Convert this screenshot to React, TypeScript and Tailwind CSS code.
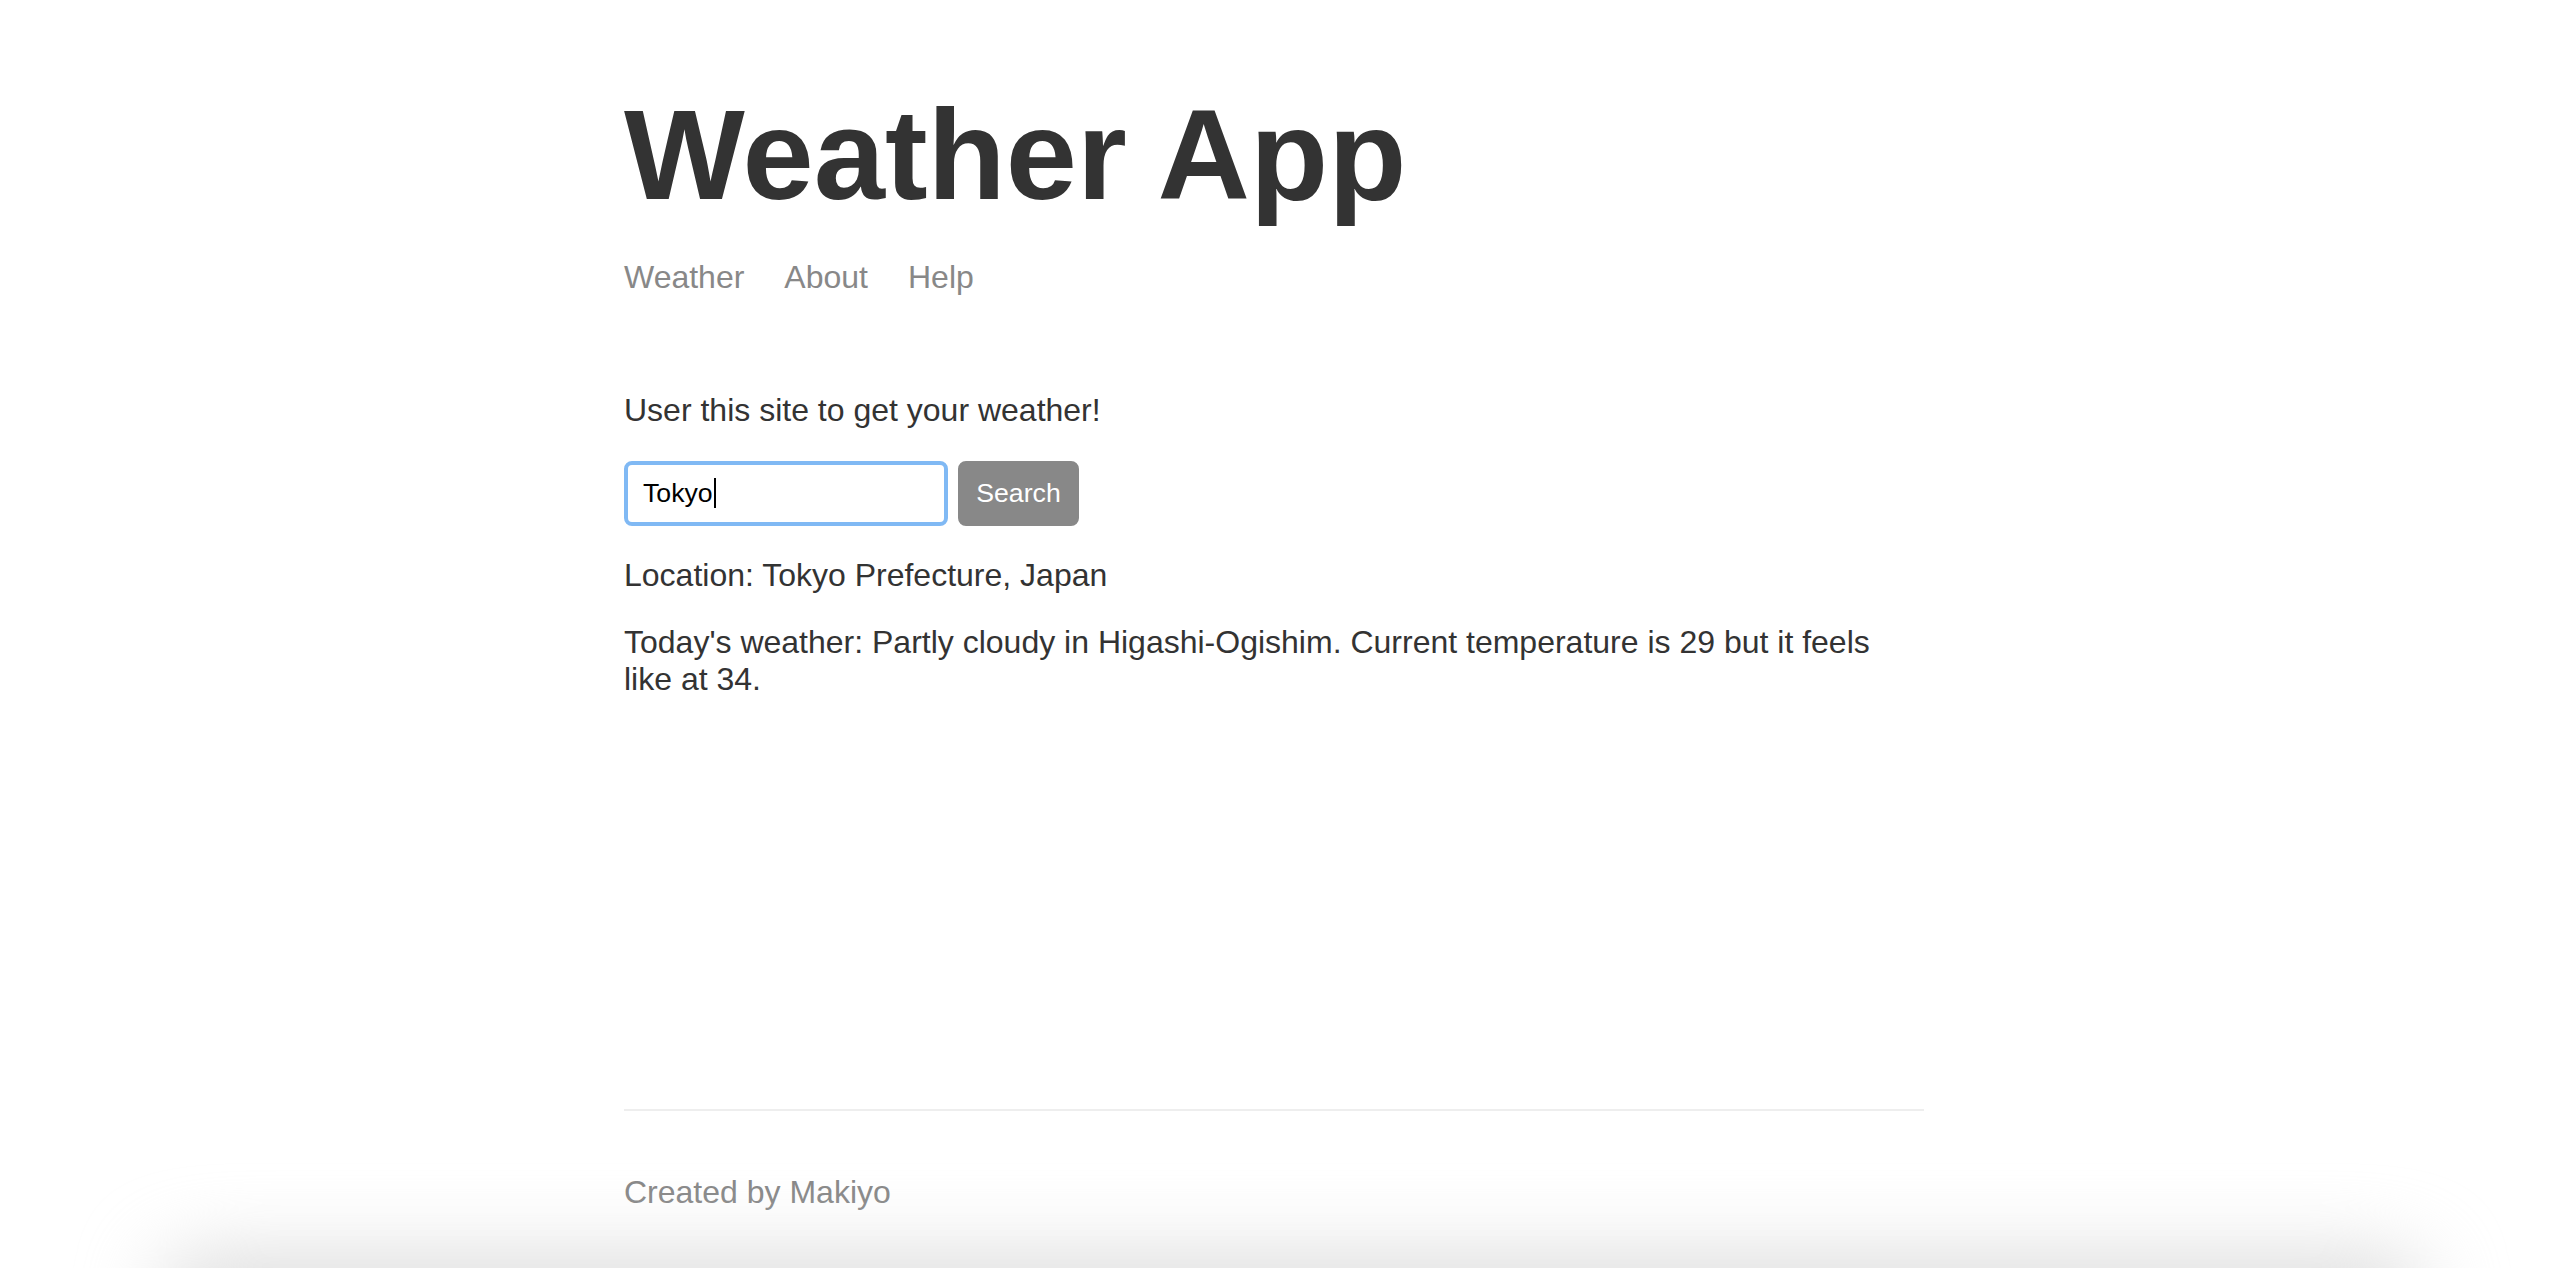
import React from "react";

export default function App() {
  return (
    <div
      className="relative min-h-screen h-[1268px] overflow-hidden bg-white text-[#333333]"
      style={{ fontFamily: '"Liberation Sans", Arial, sans-serif' }}
    >
      <div className="ml-[624px] flex h-full w-[1300px] flex-col">
        <header className="mb-[96px]">
          <h1 className="mt-[81px] mb-[31px] text-[128px] font-bold leading-[1.149]">Weather App</h1>
          <nav className="flex text-[32px] leading-[1.15] text-[#888888]">
            <a href="#" className="mr-[40px]">Weather</a>
            <a href="#" className="mr-[40px]">About</a>
            <a href="#">Help</a>
          </nav>
        </header>

        <main className="flex-1 text-[32px] leading-[1.15]">
          <p className="mb-[32px]">User this site to get your weather!</p>
          <form className="flex items-center gap-[10px]" onSubmit={(e) => e.preventDefault()}>
            <div className="flex h-[65px] w-[324px] items-center rounded-[8px] border-[4px] border-[#80b9f4] bg-white pl-[15px] text-[26.67px] text-black">
              <span>Tokyo</span>
              <span className="ml-[1px] inline-block h-[30px] w-[2px] bg-black" />
            </div>
            <button
              type="submit"
              className="h-[65px] w-[121px] rounded-[8px] border-2 border-[#888888] bg-[#888888] text-[26.67px] text-white"
            >
              Search
            </button>
          </form>
          <p className="mt-[31px]">Location: Tokyo Prefecture, Japan</p>
          <p className="mt-[31px]">
            Today's weather: Partly cloudy in Higashi-Ogishim. Current temperature is 29 but it feels like at 34.
          </p>
        </main>

        <footer className="border-t-2 border-[#eeeeee] pt-[63px] pb-[57px] text-[32px] leading-[1.15] text-[#888888]">
          <p>Created by Makiyo</p>
        </footer>
      </div>

      <div className="pointer-events-none absolute bottom-[-70px] left-[160px] right-[130px] h-[80px] rounded-[60px] bg-[#d9d9d9] blur-[40px]" />
    </div>
  );
}
